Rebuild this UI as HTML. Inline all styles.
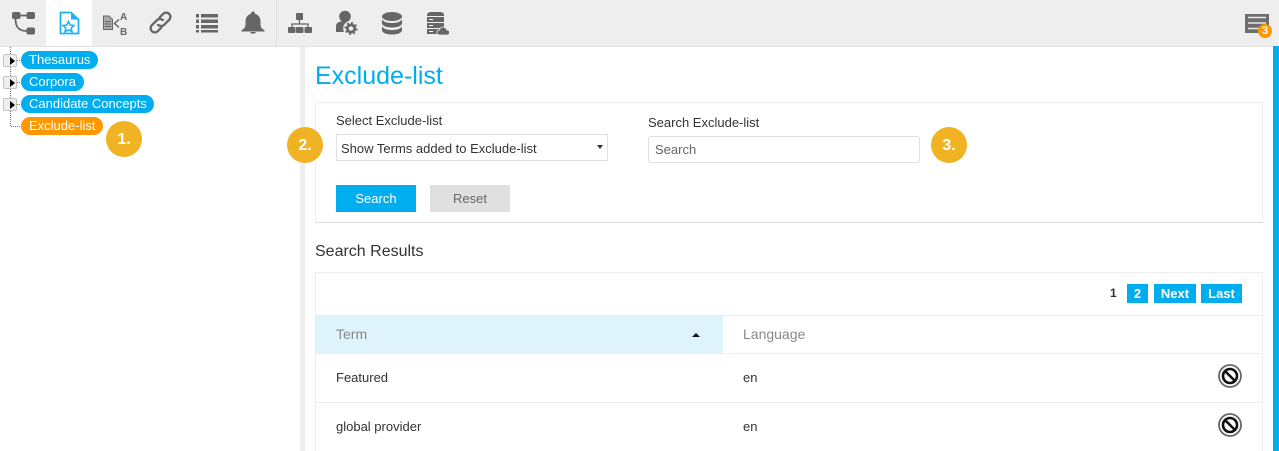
<!DOCTYPE html>
<html><head><meta charset="utf-8">
<style>
html,body{margin:0;padding:0;width:1279px;height:451px;overflow:hidden;background:#fff;font-family:"Liberation Sans",sans-serif;color:#333}
#w{position:absolute;left:0;top:0;width:1279px;height:451px;overflow:hidden}
.a{position:absolute;white-space:nowrap}
svg{position:absolute;overflow:visible}
.soft{filter:blur(.35px)}
.pill{position:absolute;height:18px;border-radius:9px;color:#fff;font-size:13px;line-height:18px;padding:0 8px;box-sizing:border-box;white-space:nowrap}
.exp{position:absolute;left:3px;width:14px;height:13px;box-sizing:border-box;border:1px solid #c4c4c4;border-radius:2px;background:#eee}
.exp:after{content:"";position:absolute;left:6px;top:2px;border-left:5px solid #000;border-top:4px solid transparent;border-bottom:4px solid transparent}
.num{position:absolute;width:36px;height:36px;border-radius:50%;background:#f0b323;color:#fff;font-weight:bold;font-size:16px;line-height:37px;text-align:center}
.pg{position:absolute;top:284px;height:19px;background:#00aeef;color:#fff;font-weight:bold;font-size:13px;line-height:19px;text-align:center}
.h{position:absolute;background:#eee}
</style></head><body><div id="w">
<div class="a" style="left:0;top:0;width:1279px;height:46px;background:#eee;border-bottom:1px solid #e2e2e2"></div>
<div class="a" style="left:46px;top:0;width:46px;height:46px;background:#fff"></div>
<div class="a" style="left:276px;top:0;width:1px;height:46px;background:#e0e0e0"></div>

<svg class="soft" style="left:0;top:0" width="480" height="46" fill="#666">
<!-- workflow -->
<rect x="12" y="12" width="8.500" height="7" rx="2"/><rect x="26.500" y="12" width="8.500" height="7" rx="2"/><rect x="26.500" y="27.500" width="8.500" height="7" rx="2"/>
<path d="M20 15.500H27M15.500 18.500C15.500 27 18.500 31 27 31" fill="none" stroke="#666" stroke-width="1.800"/>
<!-- doc star -->
<path d="M60.500 12.500H71L78.500 19.500V33.500H60.500Z" fill="none" stroke="#1ab5f1" stroke-width="1.800"/>
<path d="M71 12.500V19.500H78.500Z" fill="#1ab5f1"/>
<path d="M68.500 21.500L70.200 25L74 25.500L71.200 28L72 31.700L68.500 29.800L65 31.700L65.800 28L63 25.500L66.800 25Z" fill="none" stroke="#1ab5f1" stroke-width="1.600"/>
<!-- doc AB -->
<path d="M103.500 16H109L112.500 19.500V29.500H103.500Z" fill="#aaa" stroke="#666" stroke-width="1"/>
<path d="M105 21.500H111M105 24H111M105 26.500H111" stroke="#666" stroke-width="1"/>
<path d="M119 19.500L114.500 23.500L119 27.500" fill="none" stroke="#666" stroke-width="1.500"/>
<text x="120" y="20" font-size="10" font-weight="bold" font-family="Liberation Sans">A</text>
<text x="120" y="35" font-size="10" font-weight="bold" font-family="Liberation Sans">B</text>
<!-- link -->
<g transform="translate(160.500 22.500) rotate(-45)" fill="none" stroke="#666" stroke-width="2.300" stroke-linecap="round">
<path d="M3.500 0C3 -2.500 1.500 -4.200 -1 -4.200H-8a4.200 4.200 0 0 0 0 8.400H-3"/>
<path d="M-3.500 0C-3 2.500 -1.500 4.200 1 4.200H8a4.200 4.200 0 0 0 0 -8.400H3"/>
</g>
<!-- list -->
<path d="M196 14h3v3.500h-3zM201 14h17v3.500h-17zM196 19.500h3v3.500h-3zM201 19.500h17v3.500h-17zM196 25h3v3.500h-3zM201 25h17v3.500h-17zM196 30h3v2.500h-3zM201 30h17v2.500h-17z"/>
<!-- bell -->
<path d="M253 11.500c1.200 0 2 .8 2 2.200c3.500 1 5.500 4 5.500 7.500v3c0 3 1.500 4.500 4 6v1.300h-23v-1.300c2.500-1.500 4-3 4-6v-3c0-3.500 2-6.500 5.500-7.500c0-1.400.8-2.200 2-2.200z"/>
<path d="M250 32h6c-.3 1-1.500 1.700-3 1.700s-2.700-.7-3-1.700z"/>
<!-- org -->
<rect x="296" y="13" width="7" height="7" rx="1"/>
<path d="M299.500 20v4M292 27v-3h16v3" fill="none" stroke="#666" stroke-width="1.300"/>
<rect x="288" y="27" width="7.500" height="6" rx="1"/><rect x="296" y="27" width="7.500" height="6" rx="1"/><rect x="304.500" y="27" width="7.500" height="6" rx="1"/>
<!-- user gear -->
<circle cx="345" cy="16.500" r="5.800"/>
<path d="M336 32v-6c0-3 2.500-4 5-4.500h8c3 .5 4 2 4 4v6.500z"/>
<circle cx="351" cy="28.500" r="7.800" fill="#eee"/>
<circle cx="351" cy="28.500" r="3.700" fill="none" stroke="#666" stroke-width="2.800"/>
<circle cx="351" cy="28.500" r="5.800" fill="none" stroke="#666" stroke-width="1.500" stroke-dasharray="2 2.550"/>
<!-- db -->
<ellipse cx="392" cy="16.500" rx="10" ry="4.500"/>
<path d="M382 19.500c2 2.500 5 3.500 10 3.500s8-1 10-3.500v4.500c-2 2.500-5 3.500-10 3.500s-8-1-10-3.500z"/>
<path d="M382 26.500c2 2.500 5 3.500 10 3.500s8-1 10-3.500v4.500c-2 2.500-5 3.500-10 3.500s-8-1-10-3.500z"/>
<!-- server cloud -->
<path d="M427 15c0-2 2-3 4-3h9c2 0 4 1 4 3v1h-17z"/>
<path d="M427 17h17v5h-17zM427 23h17v5h-17zM427 29h13v5h-13z"/>
<path d="M429 19.500h4M429 25.500h4M429 31.500h4" stroke="#fff" stroke-width="1"/>
<path d="M440 35c-2 0-3-1-3-2.500s1-2.500 2.500-2.500c.5-2 2-3 3.500-3c2 0 3.500 1.500 3.800 3c1.500 0 2.700 1 2.700 2.500S448.500 35 447 35z" stroke="#eee" stroke-width=".8"/>
</svg>

<!-- notifications -->
<svg class="soft" style="left:1245px;top:14px" width="24" height="20">
<rect x="0" y="0" width="24" height="19" fill="#6e6e6e"/>
<path d="M3 3.500H21M3 9H21M3 14.500H21" stroke="#e8e8e8" stroke-width="1.600"/>
</svg>
<div class="a" style="left:1258px;top:24px;width:14px;height:14px;border-radius:50%;background:#ff9800;color:#fff;font-size:11px;font-weight:bold;line-height:15px;text-align:center">3</div>

<!-- side gutters -->
<div class="a" style="left:300px;top:47px;width:5px;height:404px;background:#eee"></div>
<div class="a" style="left:1273px;top:46px;width:6px;height:405px;background:#00aeef"></div>

<!-- tree -->
<svg style="left:0;top:47px" width="30" height="90">
<path d="M10.500 0V79.500H21M17 13.500H21M17 35.500H21M17 57.500H21" fill="none" stroke="#777" stroke-width="1" stroke-dasharray="1 1"/>
</svg>
<div class="exp" style="top:54px"></div><div class="exp" style="top:76px"></div><div class="exp" style="top:98px"></div>
<div class="pill" style="left:21px;top:51px;width:77px;background:#00aeef">Thesaurus</div>
<div class="pill" style="left:21px;top:73px;width:63px;background:#00aeef">Corpora</div>
<div class="pill" style="left:21px;top:95px;width:133px;background:#00aeef">Candidate Concepts</div>
<div class="pill" style="left:21px;top:117px;width:82px;background:#ff9800">Exclude-list</div>
<div class="num" style="left:106px;top:121px">1.</div>

<!-- main -->
<div class="a" style="left:315px;top:60px;font-size:25px;line-height:32px;color:#00aeef">Exclude-list</div>
<div class="a" style="left:315px;top:102px;width:948px;height:121px;box-sizing:border-box;border:1px solid #eee;border-bottom-color:#ddd"></div>
<div class="a" style="left:336px;top:113px;font-size:13px;line-height:16px">Select Exclude-list</div>
<div class="a" style="left:336px;top:134px;width:272px;height:27px;box-sizing:border-box;border:1px solid #e0e0e0;font-size:13px;line-height:27px;padding-left:4px">Show Terms added to Exclude-list</div>
<div class="a" style="left:597px;top:145px;border-top:4px solid #333;border-left:3px solid transparent;border-right:3px solid transparent"></div>
<div class="num" style="left:287px;top:127px">2.</div>
<div class="a" style="left:648px;top:115px;font-size:13px;line-height:16px">Search Exclude-list</div>
<div class="a" style="left:648px;top:136px;width:272px;height:27px;box-sizing:border-box;border:1px solid #e0e0e0;border-radius:3px;font-size:13px;line-height:26px;padding-left:6px;color:#666">Search</div>
<div class="num" style="left:931px;top:127px">3.</div>
<div class="a" style="left:336px;top:185px;width:80px;height:27px;background:#00aeef;color:#fff;font-size:13px;line-height:27px;text-align:center">Search</div>
<div class="a" style="left:430px;top:185px;width:80px;height:27px;background:#e0e0e0;color:#666;font-size:13px;line-height:27px;text-align:center">Reset</div>

<div class="a" style="left:315px;top:242px;font-size:16px;line-height:19px">Search Results</div>
<div class="a" style="left:315px;top:272px;width:948px;height:179px;border:1px solid #eee;border-bottom:0;box-sizing:border-box"></div>
<div class="a" style="left:1110px;top:284px;font-size:12px;font-weight:bold;line-height:19px">1</div>
<div class="pg" style="left:1127px;width:21px">2</div>
<div class="pg" style="left:1154px;width:42px">Next</div>
<div class="pg" style="left:1201px;width:41px">Last</div>
<div class="h" style="left:316px;top:315px;width:946px;height:1px"></div>
<div class="a" style="left:316px;top:316px;width:407px;height:38px;background:#dff3fc"></div>
<div class="h" style="left:316px;top:353px;width:946px;height:1px"></div>
<div class="h" style="left:316px;top:402px;width:946px;height:1px"></div>
<div class="a" style="left:336px;top:326px;font-size:14px;line-height:16px;color:#888">Term</div>
<div class="a" style="left:692px;top:333px;border-bottom:4px solid #111;border-left:4px solid transparent;border-right:4px solid transparent"></div>
<div class="a" style="left:743px;top:326px;font-size:14px;line-height:16px;color:#888">Language</div>
<div class="a" style="left:336px;top:370px;font-size:13px;line-height:15px">Featured</div>
<div class="a" style="left:743px;top:370px;font-size:13px;line-height:15px">en</div>
<div class="a" style="left:336px;top:419px;font-size:13px;line-height:15px">global provider</div>
<div class="a" style="left:743px;top:419px;font-size:13px;line-height:15px">en</div>
<svg class="soft" style="left:1218px;top:364px" width="24" height="24"><circle cx="12" cy="12" r="11" fill="none" stroke="#666" stroke-width="1.800"/><circle cx="12" cy="12" r="7" fill="none" stroke="#111" stroke-width="2.600"/><path d="M7.500 7.500L16.500 16.500" stroke="#111" stroke-width="2.600"/></svg>
<svg class="soft" style="left:1218px;top:413px" width="24" height="24"><circle cx="12" cy="12" r="11" fill="none" stroke="#666" stroke-width="1.800"/><circle cx="12" cy="12" r="7" fill="none" stroke="#111" stroke-width="2.600"/><path d="M7.500 7.500L16.500 16.500" stroke="#111" stroke-width="2.600"/></svg>
</div></body></html>
